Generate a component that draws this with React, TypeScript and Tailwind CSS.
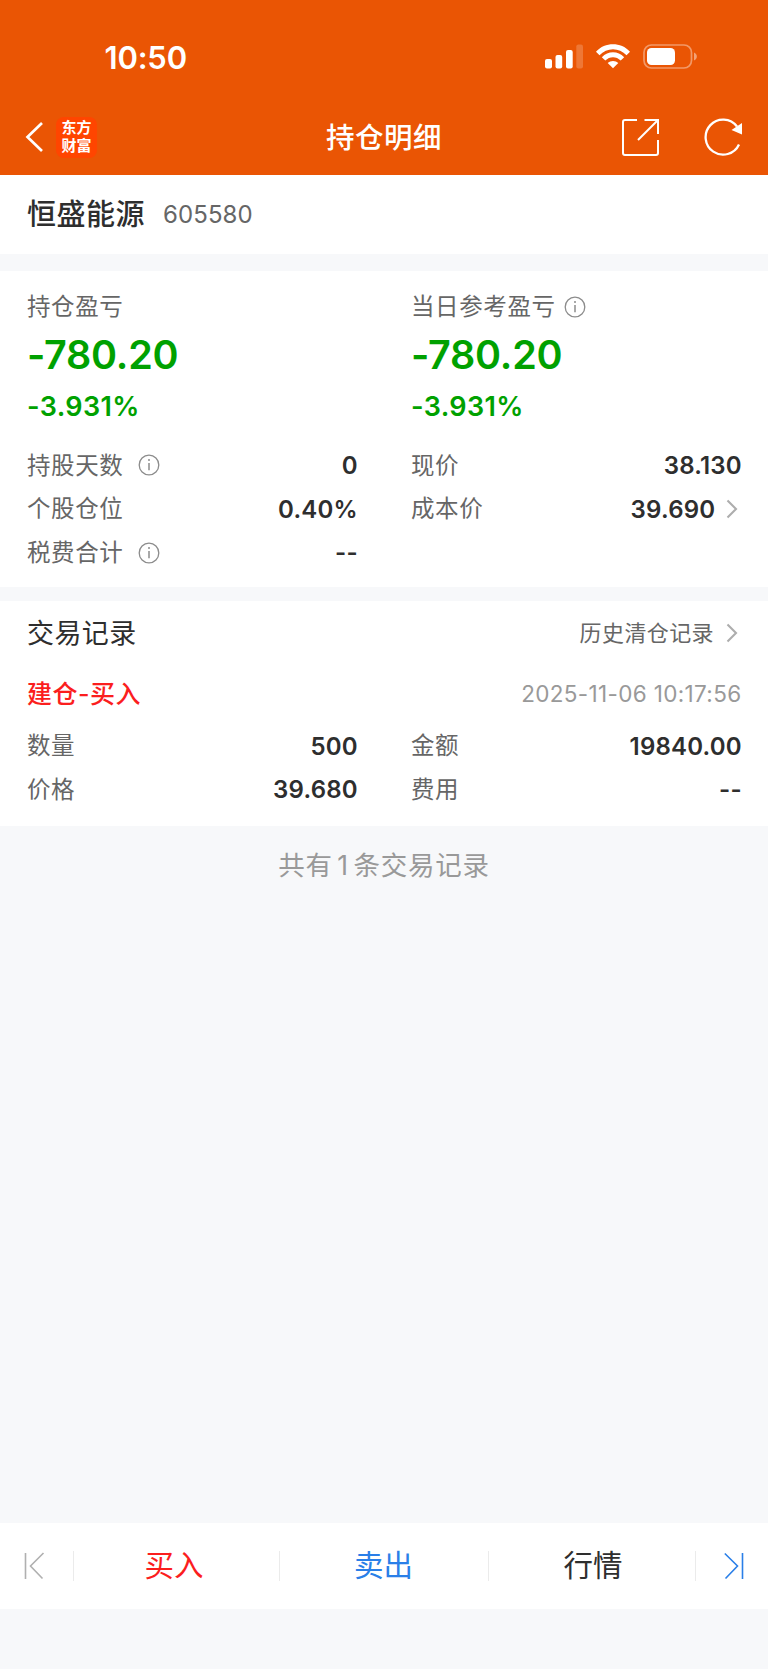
import React from "react";

function InfoIcon() {
  return (
    <svg width="22" height="22" viewBox="0 0 22 22" fill="none" className="shrink-0">
      <circle cx="11" cy="11" r="9.8" stroke="#8c8c8c" strokeWidth="1.3" />
      <path d="M11 8.9V16.3" stroke="#8c8c8c" strokeWidth="1.5" />
      <circle cx="11" cy="5.9" r="1" fill="#8c8c8c" />
    </svg>
  );
}

function Chevron() {
  return (
    <svg width="12" height="20" viewBox="0 0 12 20" fill="none" className="mr-[3.5px] shrink-0">
      <path d="M1.5 1.5L10 10L1.5 18.5" stroke="#adadad" strokeWidth="2.1" />
    </svg>
  );
}

type RowProps = { label: string; value: string; info?: boolean; more?: boolean };

function Row({ label, value, info, more }: RowProps) {
  return (
    <div className="flex h-[43.7px] items-center justify-between">
      <div className="flex items-center gap-[14.5px]">
        <span className="text-[23.5px] leading-none tracking-[0.6px] text-[#666]">{label}</span>
        {info && <InfoIcon />}
      </div>
      <div className="flex items-center gap-[11px]">
        <span className="-mr-[0.8px] pt-px text-[24px] leading-none font-semibold tracking-[0.2px] text-[#2e2e2e]">{value}</span>
        {more && <Chevron />}
      </div>
    </div>
  );
}

function Profit({ label, info }: { label: string; info?: boolean }) {
  return (
    <div className="text-[#00a100]">
      <div className="flex h-[42px] items-center gap-[8px] pt-px">
        <span className="text-[23.5px] leading-none tracking-[0.6px] text-[#666]">{label}</span>
        {info && <InfoIcon />}
      </div>
      <div className="flex h-[56px] items-center pt-[2px] text-[39.5px] leading-none font-semibold tracking-[-0.25px]">-780.20</div>
      <div className="flex h-[46px] items-center text-[27px] leading-none font-semibold tracking-[0.35px]">-3.931%</div>
    </div>
  );
}

function StatusBar() {
  return (
    <div className="flex h-[99px] items-start justify-between pt-[40px] pr-[70px] pl-[104.5px]">
      <span className="text-[31px] leading-[35px] font-semibold tracking-[-0.2px]">10:50</span>
      <svg width="154" height="26" viewBox="0 0 154 26" className="mt-[3px]" fill="#fff">
        <rect x="1" y="16" width="7" height="9.5" rx="2" />
        <rect x="11.5" y="12" width="6.7" height="13.5" rx="2" />
        <rect x="22" y="7" width="6.7" height="18.5" rx="2" />
        <rect x="32.3" y="1.5" width="6.7" height="24" rx="2" opacity=".2" />
        <path d="M52 8.7C61 -1.1 77 -1.1 86 8.7L82.5 12.2C75.2 4.2 62.8 4.2 55.5 12.2Z" />
        <path d="M57.8 14.2C64 7.5 74 7.5 80.2 14.2L76.7 17.5C72.4 13 65.6 13 61.3 17.5Z" />
        <path d="M63.7 20C66.5 17.3 71.5 17.3 74.3 20L69 25.3Z" />
        <rect x="100" y="2" width="47.5" height="23" rx="7.5" fill="none" stroke="#fff" strokeWidth="1.7" opacity=".4" />
        <rect x="103" y="5" width="28" height="17" rx="4.5" />
        <path d="M150 9.5C153.8 11 153.8 16 150 17.5Z" opacity=".45" />
      </svg>
    </div>
  );
}

function NavBar() {
  return (
    <div className="grid h-[76px] grid-cols-[1fr_auto_1fr] items-center px-[25px]">
      <div className="flex items-center">
        <svg width="19" height="32" viewBox="0 0 19 32" fill="none">
          <path d="M17 2L2.5 16L17 30" stroke="#fff" strokeWidth="2.7" />
        </svg>
        <div className="ml-[12px] flex h-[41px] w-[41px] flex-col items-center justify-center gap-[2.5px] rounded-[8px] bg-[#ff4500] pb-[3px] font-['Noto_Sans_CJK_SC',sans-serif] text-[15px] leading-none font-bold">
          <span>东方</span>
          <span>财富</span>
        </div>
      </div>
      <h1 className="pt-[2px] text-[28.5px] leading-none font-medium tracking-[0.5px]">持仓明细</h1>
      <div className="flex items-center justify-end gap-[43px]">
        <svg width="39" height="39" viewBox="0 0 39 39" fill="none" stroke="#fff" strokeWidth="2">
          <path d="M16 2H4Q2 2 2 4V35Q2 37 4 37H35Q37 37 37 35V22" />
          <path d="M23.5 2H37V16" />
          <path d="M37 2L17 22" />
        </svg>
        <svg width="40" height="40" viewBox="0 0 40 40" fill="none" stroke="#fff" strokeWidth="2.3">
          <path d="M36 27.5A17.5 17.5 0 1 1 34 9.5" />
          <path d="M39 6V17.5L28.5 13Z" fill="#fff" stroke="none" />
        </svg>
      </div>
    </div>
  );
}

function Divider() {
  return <div className="h-[30px] w-px bg-[#ebebeb]" />;
}

export default function App() {
  return (
    <div className="flex h-[1669px] w-[768px] flex-col bg-[#f7f8fa] font-['Inter','Noto_Sans_CJK_SC',sans-serif]">
      <header className="h-[175px] bg-[#ea5504] text-white">
        <StatusBar />
        <NavBar />
      </header>

      <section className="flex h-[79px] items-center gap-[18px] bg-white px-[27px]">
        <span className="text-[29px] leading-none font-medium tracking-[0.5px] text-[#2e2e2e]">恒盛能源</span>
        <span className="text-[24px] leading-none tracking-[0.1px] text-[#666]">605580</span>
      </section>

      <section className="mt-[17px] h-[316px] bg-white px-[27px] pt-[14px]">
        <div className="grid grid-cols-2 gap-x-[54px]">
          <Profit label="持仓盈亏" />
          <Profit label="当日参考盈亏" info />
        </div>
        <div className="mt-[14.5px] grid grid-cols-2 gap-x-[54px]">
          <Row label="持股天数" value="0" info />
          <Row label="现价" value="38.130" />
          <Row label="个股仓位" value="0.40%" />
          <Row label="成本价" value="39.690" more />
          <Row label="税费合计" value="--" info />
        </div>
      </section>

      <section className="mt-[14px] h-[225px] bg-white px-[27px]">
        <div className="flex h-[64px] items-center justify-between">
          <h2 className="text-[27px] leading-none tracking-[0.4px] text-[#2e2e2e]">交易记录</h2>
          <div className="flex items-center gap-[11.5px]">
            <span className="text-[22px] leading-none tracking-[0.4px] text-[#666]">历史清仓记录</span>
            <Chevron />
          </div>
        </div>
        <div className="flex h-[57px] items-center justify-between pt-px">
          <span className="text-[25px] leading-none font-medium tracking-[0.5px] text-[#fb1e1e]">建仓-买入</span>
          <span className="-mr-[0.5px] text-[22.5px] leading-none tracking-[0.34px] text-[#999]">2025-11-06 10:17:56</span>
        </div>
        <div className="mt-[2.3px] grid grid-cols-2 gap-x-[54px]">
          <Row label="数量" value="500" />
          <Row label="金额" value="19840.00" />
          <Row label="价格" value="39.680" />
          <Row label="费用" value="--" />
        </div>
      </section>

      <p className="flex h-[78px] items-center justify-center text-[26.5px] leading-none tracking-[0.75px] text-[#999]">
        <span>共有</span>
        <span className="px-[4.5px]">1</span>
        <span>条交易记录</span>
      </p>

      <nav className="mt-auto mb-[60px] flex h-[86px] items-center bg-white text-[29.5px] leading-none">
        <div className="flex w-[73px] justify-start pl-[24px]">
          <svg width="21" height="28" viewBox="0 0 21 28" fill="none" stroke="#b0b0b0" strokeWidth="1.6">
            <path d="M1.5 1V27M19.5 1L6.5 14L18.5 26.5" />
          </svg>
        </div>
        <Divider />
        <div className="w-[205px] pr-[5px] text-center text-[#fb1e1e]">买入</div>
        <Divider />
        <div className="w-[208px] pr-[1px] text-center text-[#2a7fe8]">卖出</div>
        <Divider />
        <div className="w-[206px] pl-[2px] text-center text-[#2e2e2e]">行情</div>
        <Divider />
        <div className="flex flex-1 justify-end pr-[23.5px]">
          <svg width="21" height="28" viewBox="0 0 21 28" fill="none" stroke="#2a7fe8" strokeWidth="1.6">
            <path d="M18.5 1V27M.8 1.5L13.5 14L1.5 26.5" />
          </svg>
        </div>
      </nav>
    </div>
  );
}
